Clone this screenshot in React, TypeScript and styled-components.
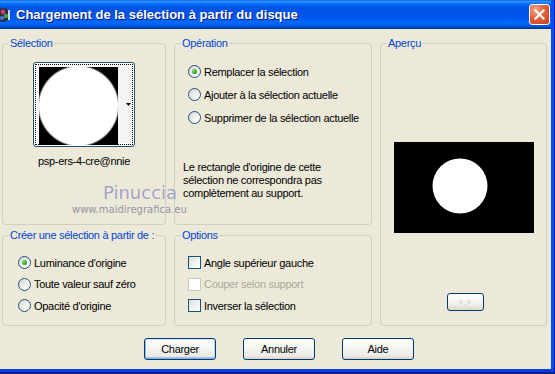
import React from 'react';
import styled, { createGlobalStyle } from 'styled-components';

const GlobalStyle = createGlobalStyle`
  html, body {
    margin: 0;
    padding: 0;
    overflow: hidden;
    background: #ece9d8;
  }
  body {
    font-family: 'Liberation Sans', Arial, sans-serif;
    font-size: 11px;
    letter-spacing: -0.3px;
    color: #000;
  }
  * {
    box-sizing: border-box;
  }
`;

const Frame = styled.div`
  width: 555px;
  height: 374px;
  border-right: 1px solid #0019b0;
  border-bottom: 2px solid #0c1f8a;
  display: flex;
  flex-direction: column;
`;

const Window = styled.div`
  flex: 1;
  display: flex;
  flex-direction: column;
  border-right: 3px solid #0a4cf0;
  border-bottom: 3px solid #0a3fe0;
  background: #ece9d8;
  min-height: 0;
`;

const TitleBar = styled.div`
  height: 29px;
  flex: none;
  display: flex;
  align-items: center;
  gap: 5px;
  padding-right: 1px;
  background: linear-gradient(
    180deg,
    #0058ee 0%,
    #3593ff 4%,
    #288eff 7%,
    #127dff 10%,
    #036ffc 14%,
    #0262ee 18%,
    #0057e5 24%,
    #0054e3 30%,
    #0055eb 56%,
    #005bf5 66%,
    #026afe 76%,
    #0062ef 86%,
    #0052d6 92%,
    #0040ab 96%,
    #003092 100%
  );
`;

const TitleText = styled.div`
  flex: 1;
  color: #fff;
  font-family: 'Liberation Sans', Arial, sans-serif;
  font-weight: 700;
  font-size: 13px;
  letter-spacing: 0;
  text-shadow: 1px 1px #0a1883;
  white-space: nowrap;
`;

const CloseButton = styled.div`
  width: 21px;
  height: 21px;
  border: 1px solid #fff;
  border-radius: 3px;
  background: radial-gradient(circle at 30% 25%, #f0a48c 0%, #e2613b 45%, #c8401c 100%);
  display: flex;
  align-items: center;
  justify-content: center;
`;

const Body = styled.div`
  flex: 1;
  position: relative;
  padding: 8px 4px 0 2px;
  display: flex;
  flex-direction: column;
`;

const GroupsGrid = styled.div`
  display: grid;
  grid-template-columns: 164px 198px 167px;
  grid-template-rows: 188px 97px;
  gap: 4px 8px;
`;

const Group = styled.fieldset<{ $tall?: boolean }>`
  margin: 0;
  padding: 0 6px;
  min-width: 0;
  border: 1px solid #d0d0bf;
  border-radius: 4px;
  grid-row: ${(p) => (p.$tall ? '1 / span 2' : 'auto')};
  grid-column: ${(p) => (p.$tall ? '3' : 'auto')};
`;

const Legend = styled.legend`
  padding: 0 1px;
  color: #0046d5;
  font-size: 11px;
  line-height: 13px;
  white-space: nowrap;
`;

const SelectionBody = styled.div`
  display: flex;
  flex-direction: column;
  align-items: center;
  padding-top: 12px;
`;

const ThumbFrame = styled.div`
  width: 102px;
  height: 85px;
  border: 1px solid #1c5180;
  border-radius: 3px;
  padding: 1px;
  background: #fff;
`;

const FocusRect = styled.div`
  height: 100%;
  border: 1px dotted #000;
  padding: 2px 0 1px 3px;
  display: flex;
`;

const ThumbSide = styled.div`
  flex: 1;
  background: #f4f4f4;
  display: flex;
  align-items: center;
  justify-content: flex-end;
`;

const Caption = styled.div`
  margin-top: 8px;
  line-height: 13px;
  white-space: nowrap;
`;

const OptionList = styled.div<{ $left: number }>`
  display: flex;
  flex-direction: column;
  padding: 10px 0 0 ${(p) => p.$left}px;
`;

const OptionRow = styled.label<{ $h: number; $disabled?: boolean }>`
  height: ${(p) => p.$h}px;
  display: flex;
  align-items: center;
  gap: 3px;
  white-space: nowrap;
  color: ${(p) => (p.$disabled ? '#aca899' : '#000')};
`;

const RadioCircle = styled.span<{ $checked?: boolean }>`
  width: 13px;
  height: 13px;
  flex: none;
  border-radius: 50%;
  border: 1px solid #1c5180;
  background: linear-gradient(135deg, #d6d5cd 0%, #f4f3ef 60%, #fff 100%);
  display: flex;
  align-items: center;
  justify-content: center;
  &::after {
    content: '';
    width: 5px;
    height: 5px;
    border-radius: 50%;
    background: radial-gradient(circle at 35% 35%, #6ee26a 0%, #21a121 70%);
    display: ${(p) => (p.$checked ? 'block' : 'none')};
  }
`;

const CheckBox = styled.span<{ $disabled?: boolean }>`
  width: 13px;
  height: 13px;
  flex: none;
  border: 1px solid ${(p) => (p.$disabled ? '#cac8bb' : '#1c5180')};
  background: ${(p) =>
    p.$disabled ? '#fff' : 'linear-gradient(135deg, #dcdcd7 0%, #f2f2ee 55%, #fff 100%)'};
`;

const InfoText = styled.div`
  margin-top: 32px;
  padding-left: 2px;
  line-height: 13px;
  white-space: nowrap;
`;

const PreviewBody = styled.div`
  display: flex;
  flex-direction: column;
  align-items: center;
`;

const PreviewBox = styled.div`
  margin-top: 92px;
  width: 140px;
  height: 91px;
  background: #000;
`;

const SmallButton = styled.div`
  margin-top: 60px;
  margin-left: 4px;
  width: 37px;
  height: 18px;
  border: 1px solid #003c74;
  border-radius: 3px;
  background: linear-gradient(180deg, #fff 0%, #f2f1ec 60%, #dcd8cc 100%);
  display: flex;
  align-items: flex-end;
  justify-content: center;
  padding-bottom: 2px;
`;

const ButtonRow = styled.div`
  display: flex;
  justify-content: center;
  gap: 27px;
  margin-top: 12px;
  padding-left: 9px;
`;

const Button = styled.div<{ $default?: boolean }>`
  width: 72px;
  height: 22px;
  border: 1px solid #003c74;
  border-radius: 3px;
  background: linear-gradient(180deg, #fff 0%, #f3f3ef 50%, #ecebe6 85%, #d6d0c5 100%);
  display: flex;
  align-items: center;
  justify-content: center;
  font-size: 11px;
  box-shadow: ${(p) =>
    p.$default
      ? 'inset 0 1px #cee7ff, inset 1px 0 #98b8ea, inset -1px 0 #bcd4f6, inset 0 -1px #89ade4, inset 0 -2px #a7c3ee'
      : 'none'};
`;

const Watermark = styled.div`
  position: absolute;
  left: 72px;
  top: 153px;
  display: flex;
  flex-direction: column;
  pointer-events: none;
  letter-spacing: 0;
`;

const WatermarkName = styled.div`
  margin-left: 31px;
  font-family: 'DejaVu Sans', sans-serif;
  font-size: 18px;
  line-height: 22px;
  color: #a0a0c2;
  text-shadow: 0 0 1px #ffffff;
`;

const WatermarkUrl = styled.div`
  margin-top: 0;
  font-family: 'DejaVu Sans', sans-serif;
  font-size: 10px;
  line-height: 12px;
  color: #9494a4;
`;

const AppIcon = () => (
  <svg width="11" height="16" viewBox="0 0 11 16">
    <circle cx="3" cy="8" r="7" fill="#2b2b3a" />
    <circle cx="3" cy="5" r="2.4" fill="#d03a6a" />
    <circle cx="6" cy="9" r="2.2" fill="#3aa84c" />
    <circle cx="2" cy="11" r="2" fill="#4a7ae0" />
    <rect x="8" y="3" width="2" height="10" fill="#cfd8f0" />
  </svg>
);

const CloseIcon = () => (
  <svg width="11" height="11" viewBox="0 0 11 11">
    <path d="M1.5 1.5 L9.5 9.5 M9.5 1.5 L1.5 9.5" stroke="#fff" strokeWidth="2.2" strokeLinecap="square" />
  </svg>
);

const Radio = ({ label, checked, h }: { label: string; checked?: boolean; h: number }) => (
  <OptionRow $h={h}>
    <RadioCircle $checked={checked} />
    {label}
  </OptionRow>
);

const Check = ({ label, disabled, h }: { label: string; disabled?: boolean; h: number }) => (
  <OptionRow $h={h} $disabled={disabled}>
    <CheckBox $disabled={disabled} />
    {label}
  </OptionRow>
);

export default function App() {
  return (
    <>
      <GlobalStyle />
      <Frame>
        <Window>
          <TitleBar>
            <AppIcon />
            <TitleText>Chargement de la sélection à partir du disque</TitleText>
            <CloseButton>
              <CloseIcon />
            </CloseButton>
          </TitleBar>
          <Body>
            <GroupsGrid>
              <Group>
                <Legend>Sélection</Legend>
                <SelectionBody>
                  <ThumbFrame>
                    <FocusRect>
                      <svg width="79" height="78" viewBox="0 0 79 78">
                        <defs>
                          <radialGradient id="thumbGlow">
                            <stop offset="0.95" stopColor="#fff" />
                            <stop offset="1" stopColor="#fff" stopOpacity="0" />
                          </radialGradient>
                        </defs>
                        <rect width="79" height="78" fill="#000" />
                        <circle cx="39.5" cy="39" r="41" fill="url(#thumbGlow)" />
                      </svg>
                      <ThumbSide>
                        <svg width="6" height="4" viewBox="0 0 6 4">
                          <path d="M0 0 H5 L2.5 3 Z" fill="#000" />
                        </svg>
                      </ThumbSide>
                    </FocusRect>
                  </ThumbFrame>
                  <Caption>psp-ers-4-cre@nnie</Caption>
                </SelectionBody>
              </Group>

              <Group>
                <Legend>Opération</Legend>
                <OptionList $left={7}>
                  <Radio h={23} checked label="Remplacer la sélection" />
                  <Radio h={23} label="Ajouter à la sélection actuelle" />
                  <Radio h={23} label="Supprimer de la sélection actuelle" />
                </OptionList>
                <InfoText>
                  Le rectangle d'origine de cette
                  <br />
                  sélection ne correspondra pas
                  <br />
                  complètement au support.
                </InfoText>
              </Group>

              <Group $tall>
                <Legend>Aperçu</Legend>
                <PreviewBody>
                  <PreviewBox>
                    <svg width="140" height="91" viewBox="0 0 140 91">
                      <circle cx="66" cy="44" r="27.5" fill="#fff" />
                    </svg>
                  </PreviewBox>
                  <SmallButton>
                    <svg width="14" height="8" viewBox="0 0 14 8">
                      <rect x="0" y="0" width="4" height="4" fill="#e4e4e4" />
                      <rect x="8" y="0" width="4" height="4" fill="#e4e4e4" />
                      <rect x="4" y="4" width="4" height="4" fill="#e4e4e4" />
                    </svg>
                  </SmallButton>
                </PreviewBody>
              </Group>

              <Group>
                <Legend>Créer une sélection à partir de :</Legend>
                <OptionList $left={9}>
                  <Radio h={21.5} checked label="Luminance d'origine" />
                  <Radio h={21.5} label="Toute valeur sauf zéro" />
                  <Radio h={21.5} label="Opacité d'origine" />
                </OptionList>
              </Group>

              <Group>
                <Legend>Options</Legend>
                <OptionList $left={7}>
                  <Check h={21.5} label="Angle supérieur gauche" />
                  <Check h={21.5} disabled label="Couper selon support" />
                  <Check h={21.5} label="Inverser la sélection" />
                </OptionList>
              </Group>
            </GroupsGrid>

            <ButtonRow>
              <Button $default>Charger</Button>
              <Button>Annuler</Button>
              <Button>Aide</Button>
            </ButtonRow>

            <Watermark>
              <WatermarkName>Pinuccia</WatermarkName>
              <WatermarkUrl>www.maidiregrafica.eu</WatermarkUrl>
            </Watermark>
          </Body>
        </Window>
      </Frame>
    </>
  );
}
